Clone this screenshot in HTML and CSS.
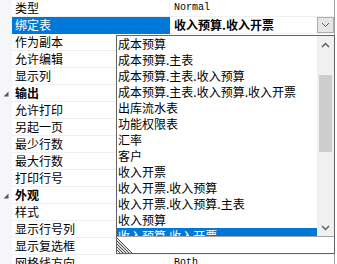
FILE: index.html
```html
<!DOCTYPE html>
<html lang="zh-CN">
<head>
  <meta charset="UTF-8">
  <title>属性</title>
  <link rel="stylesheet" href="styles.css">
</head>
<body>
  <div class="page">
    <div class="grid">
      <div class="row"><span class="gutter"></span><span class="name">类型</span><span class="value mono">Normal</span></div>
      <div class="row">
        <span class="gutter"></span><span class="name selected">绑定表</span>
        <span class="value combo"><b>收入预算.收入开票</b>
          <span class="combo-btn">
            <svg width="9" height="6" viewBox="0 0 9 6"><path d="M1 1 L4.5 4.5 L8 1" fill="none" stroke="#606060" stroke-width="1"/></svg>
          </span>
        </span>
      </div>
      <div class="row"><span class="gutter"></span><span class="name">作为副本</span><span class="value"></span></div>
      <div class="row"><span class="gutter"></span><span class="name">允许编辑</span><span class="value"></span></div>
      <div class="row"><span class="gutter"></span><span class="name">显示列</span><span class="value"></span></div>
      <div class="row category">
        <span class="gutter"><svg width="6" height="6" viewBox="0 0 6 6"><path d="M5.5 0.5 L5.5 5.5 L0.5 5.5 Z" fill="#595959"/></svg></span>
        <span class="name">输出</span><span class="value"></span>
      </div>
      <div class="row"><span class="gutter"></span><span class="name">允许打印</span><span class="value"></span></div>
      <div class="row"><span class="gutter"></span><span class="name">另起一页</span><span class="value"></span></div>
      <div class="row"><span class="gutter"></span><span class="name">最少行数</span><span class="value"></span></div>
      <div class="row"><span class="gutter"></span><span class="name">最大行数</span><span class="value"></span></div>
      <div class="row"><span class="gutter"></span><span class="name">打印行号</span><span class="value"></span></div>
      <div class="row category">
        <span class="gutter"><svg width="6" height="6" viewBox="0 0 6 6"><path d="M5.5 0.5 L5.5 5.5 L0.5 5.5 Z" fill="#595959"/></svg></span>
        <span class="name">外观</span><span class="value"></span>
      </div>
      <div class="row"><span class="gutter"></span><span class="name">样式</span><span class="value"></span></div>
      <div class="row"><span class="gutter"></span><span class="name">显示行号列</span><span class="value"></span></div>
      <div class="row"><span class="gutter"></span><span class="name">显示复选框</span><span class="value"></span></div>
      <div class="row"><span class="gutter"></span><span class="name">网格线方向</span><span class="value mono">Both</span></div>
    </div>

    <!-- dropdown list of the 绑定表 combo -->
    <div class="dropdown">
      <div class="list">
        <ul class="items">
          <li>成本预算</li>
          <li>成本预算.主表</li>
          <li>成本预算.主表.收入预算</li>
          <li>成本预算.主表.收入预算.收入开票</li>
          <li>出库流水表</li>
          <li>功能权限表</li>
          <li>汇率</li>
          <li>客户</li>
          <li>收入开票</li>
          <li>收入开票.收入预算</li>
          <li>收入开票.收入预算.主表</li>
          <li>收入预算</li>
          <li class="active">收入预算.收入开票</li>
        </ul>
        <div class="scrollbar">
          <div class="arrow">
            <svg width="9" height="6" viewBox="0 0 9 6"><path d="M1 5 L4.5 1.5 L8 5" fill="none" stroke="#606060" stroke-width="1.5"/></svg>
          </div>
          <div class="track"><div class="thumb"></div></div>
          <div class="arrow">
            <svg width="9" height="6" viewBox="0 0 9 6"><path d="M1 1 L4.5 4.5 L8 1" fill="none" stroke="#606060" stroke-width="1.5"/></svg>
          </div>
        </div>
      </div>
      <div class="grip-bar">
        <svg width="16" height="16" viewBox="0 0 16 16">
          <path d="M0 1 L15 16 M0 4 L12 16 M0 7 L9 16 M0 10 L6 16 M0 13 L3 16" stroke="#505050" stroke-width="1"/>
          <path d="M0 2.5 L13.5 16 M0 5.5 L10.5 16 M0 8.5 L7.5 16 M0 11.5 L4.5 16" stroke="#b0b0b0" stroke-width="1"/>
        </svg>
      </div>
    </div>
  </div>
</body>
</html>
```

FILE: styles.css
```css
body {
  margin: 0;
  background-color: #fff;
  font-family: "Noto Sans CJK SC", "Liberation Sans", sans-serif;
  font-size: 12px;
  color: #000;
}

.page {
  position: relative;
  width: 337px;
  height: 264px;
  overflow: hidden;
}

.grid {
  width: 334px;
  height: 264px;
  border-right: 1px solid #a0a0a0;
}

.row {
  display: flex;
  height: 17px;
}

.gutter {
  width: 12px;
  flex: none;
  background-color: #f4f6f9;
  display: flex;
  align-items: center;
  justify-content: center;
}

.name {
  width: 154px;
  flex: none;
  padding-left: 3px;
  line-height: 16px;
  border-bottom: 1px solid #f0f0f0;
  border-right: 1px solid #f0f0f0;
  white-space: nowrap;
  overflow: hidden;
}

.name.selected {
  background-color: #0078d7;
  color: #fff;
  border-color: #0078d7;
}

.category .name {
  font-weight: bold;
}

.value {
  flex: 1;
  padding-left: 4px;
  line-height: 16px;
  border-bottom: 1px solid #f0f0f0;
  white-space: nowrap;
}

.mono {
  font-family: "Liberation Mono", monospace;
  font-size: 10px;
}

.combo {
  display: flex;
  align-items: center;
  justify-content: space-between;
  padding-right: 0;
}

.combo-btn {
  width: 15px;
  height: 14px;
  background-color: #e5e5e5;
  border: 1px solid #acacac;
  display: flex;
  align-items: center;
  justify-content: center;
}

.dropdown {
  position: absolute;
  left: 116px;
  top: 35px;
  width: 217px;
  border: 1px solid #646464;
  background-color: #fff;
}

.list {
  display: flex;
  height: 200px;
}

.items {
  list-style: none;
  margin: 0;
  padding: 0;
  width: 200px;
  overflow: hidden;
}

.items li {
  height: 16px;
  line-height: 16px;
  padding-left: 1px;
  white-space: nowrap;
}

.items li.active {
  background-color: #0078d7;
  color: #fff;
}

.scrollbar {
  width: 17px;
  background-color: #f0f0f0;
  display: flex;
  flex-direction: column;
}

.arrow {
  height: 17px;
  display: flex;
  align-items: center;
  justify-content: center;
}

.track {
  flex: 1;
  padding: 22px 2px 0 2px;
}

.thumb {
  height: 77px;
  background-color: #cdcdcd;
}

.grip-bar {
  height: 16px;
  border-top: 1px solid #a0a0a0;
}
```
